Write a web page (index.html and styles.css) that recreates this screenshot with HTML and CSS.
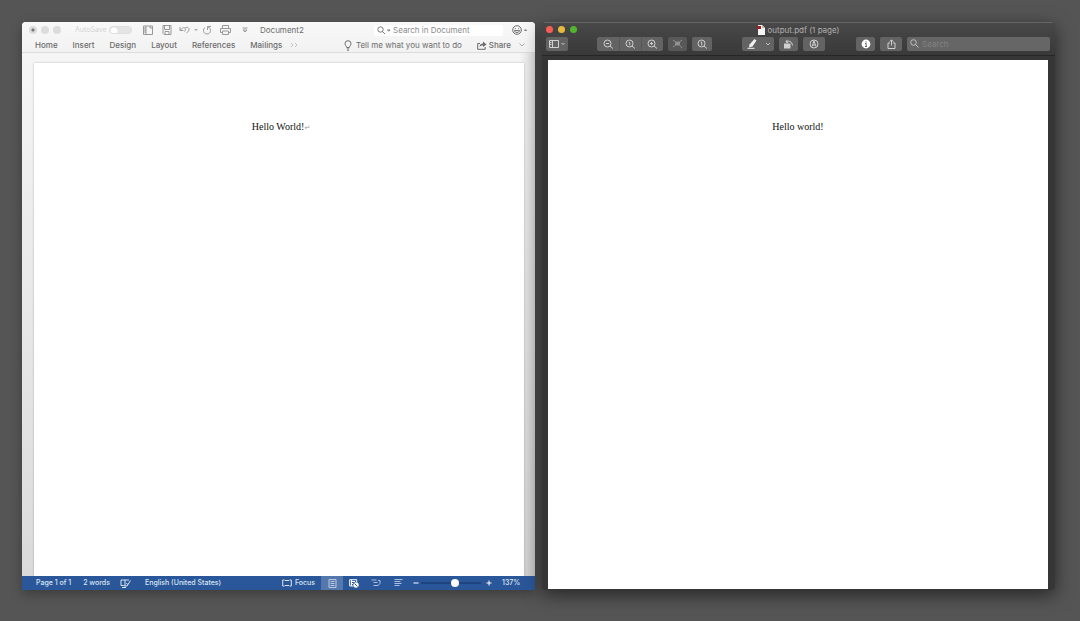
FILE: index.html
```html
<!DOCTYPE html>
<html lang="en">
<head>
<meta charset="utf-8">
<title>Document2 and output.pdf</title>
<link rel="stylesheet" href="styles.css">
</head>
<body>
<main class="desktop">
  <section class="word" aria-label="Document2">
    <header class="ribbon">
      <div class="titlebar">
        <div class="lights">
          <button class="light edited" aria-label="Close"></button>
          <button class="light" aria-label="Minimize"></button>
          <button class="light" aria-label="Zoom"></button>
        </div>
        <label class="autosave"><span class="autosave-text">AutoSave</span><input type="checkbox" class="toggle" disabled></label>
        <div class="quick">
          <button aria-label="Templates"><svg width="10" height="10" viewBox="0 0 10 10"><path d="M.5 1h9v8.500h-9zM3 1v8.500M.5 3H3M.5 5H3M.5 7H3M7 1v2h2.500"/></svg></button>
          <button aria-label="Save"><svg width="10" height="10" viewBox="0 0 10 10"><path d="M1 .5h8v9H2L1 8.500zM2.500 .5v4h5v-4M3 9.500v-3h4v3"/></svg></button>
          <button class="undo" aria-label="Undo"><svg width="12" height="10" viewBox="0 0 12 10"><path d="M1 2v3.500h3.500M1.300 5.300C3 3 4 2.500 5.500 3 7 3.500 6.500 5 5.500 6.500M6 3c2-1.500 4-.5 4 1.500S8.500 7 7.500 8"/></svg></button>
          <span class="caret"></span>
          <button class="redo" aria-label="Redo"><svg width="10" height="10" viewBox="0 0 10 10"><path d="M3 2.500C.5 4 1 9 5 9s4.500-5 2-6.500L5.500 2M5.500 5V1.500H9"/></svg></button>
          <button aria-label="Print"><svg width="11" height="10" viewBox="0 0 11 10"><path d="M2.500 3.500v-3h6v3M2.500 7.500h-2v-4h10v4h-2M2.500 6h6v3.500h-6z"/></svg></button>
          <button aria-label="Customize toolbar"><svg width="6" height="6" viewBox="0 0 6 6"><path d="M.5 1h5M1 3l2 2 2-2z"/></svg></button>
        </div>
        <h1 class="doc-name">Document2</h1>
        <label class="find">
          <svg width="14" height="9" viewBox="0 0 14 9"><circle cx="3.500" cy="3.500" r="2.700"/><path d="M5.500 5.500 8 8M10.500 4h2.500l-1.200 1z"/></svg>
          <input type="search" placeholder="Search in Document" aria-label="Search in Document">
        </label>
        <button class="smiley" aria-label="Feedback"><svg width="15" height="10" viewBox="0 0 15 10"><circle cx="5" cy="5" r="4.300"/><path d="M3.300 3.200v1M6.700 3.200v1M2.500 5.600h5C7 8.300 3 8.300 2.500 5.600M12.500 5h2l-1 1z"/></svg></button>
      </div>
      <nav class="tabs">
        <button>Home</button><button>Insert</button><button>Design</button><button>Layout</button><button>References</button><button>Mailings</button>
        <button class="more" aria-label="More tabs"><svg width="8" height="6" viewBox="0 0 8 6"><path d="m1 1 2 2-2 2M5 1l2 2-2 2"/></svg></button>
        <button class="tell"><svg width="8" height="11" viewBox="0 0 8 11"><path d="M2.700 7.500C2.500 6 1 5.500 1 3.700a3 3 0 0 1 6 0C7 5.500 5.500 6 5.300 7.500zM2.800 9h2.400M3.300 10.400h1.400"/></svg>Tell me what you want to do</button>
        <button class="share"><svg width="10" height="9" viewBox="0 0 10 9"><path d="M3 2.500H.7v5.800h7.500V6"/><path class="solid" d="M2.500 6C2.800 3.500 4 2.500 6 2.500V.5l3.500 3L6 6V4.500c-1.500 0-2.500.3-3.500 1.500z"/></svg>Share</button>
        <button class="collapse" aria-label="Collapse ribbon"><svg width="6" height="4" viewBox="0 0 6 4"><path d="m.5.5 2.500 2.500L5.500.5"/></svg></button>
      </nav>
    </header>
    <div class="canvas">
      <article class="page"><p class="hello">Hello World!<span class="mark">↵</span></p></article>
    </div>
    <footer class="status">
      <span>Page 1 of 1</span>
      <span class="words">2 words</span>
      <button class="proof" aria-label="Proofing"><svg width="11" height="9" viewBox="0 0 11 9"><path d="M9 1H5v6L3.500 6.500H1V1h4M5 7h2l3.500-5.500M2 8.500h4M6.500 4l1 1.500"/></svg></button>
      <span class="language">English (United States)</span>
      <button class="focus"><svg width="10" height="8" viewBox="0 0 10 8"><path d="M2.500 1H.7v6h1.800M7.500 1h1.800v6H7.500M3 1.500h4M3 6.500h4"/></svg>Focus</button>
      <button class="view current" aria-label="Print layout"><svg width="9" height="9" viewBox="0 0 9 9"><path d="M1 .5h7v8H1zM2.500 2.500h4M2.500 4.500h4M2.500 6.500h4"/></svg></button>
      <button class="view bright" aria-label="Web layout"><svg width="10" height="9" viewBox="0 0 10 9"><path d="M4 7H.7V.7h7V3M2 2.500h4M2 4.500h2M2.500 1v6"/><circle class="solid" cx="7" cy="6" r="2.700"/><path class="hand" d="M5.500 4.500 8.500 7.500"/></svg></button>
      <button class="view" aria-label="Outline"><svg width="10" height="8" viewBox="0 0 10 8"><path d="M.5 1h5M2.500 3.500h4M2.500 6.500h5M7 1.500h2v3L7.500 6"/></svg></button>
      <button class="view" aria-label="Draft"><svg width="9" height="8" viewBox="0 0 9 8"><path d="M.5.5h8M.5 2.500h6M.5 4.500h7M.5 6.500h5"/></svg></button>
      <button class="step" aria-label="Zoom out"><svg width="6" height="6" viewBox="0 0 6 6"><path d="M.5 3h5"/></svg></button>
      <input class="slider" type="range" min="10" max="200" value="120" aria-label="Zoom">
      <button class="step" aria-label="Zoom in"><svg width="6" height="6" viewBox="0 0 6 6"><path d="M.5 3h5M3 .5v5"/></svg></button>
      <span class="percent">137%</span>
    </footer>
  </section>

  <section class="preview" aria-label="output.pdf">
    <header class="chrome">
      <div class="caption">
        <div class="lights">
          <button class="light red" aria-label="Close"></button>
          <button class="light yellow" aria-label="Minimize"></button>
          <button class="light green" aria-label="Zoom"></button>
        </div>
        <h2 class="file"><svg width="8" height="10" viewBox="0 0 8 10"><path fill="#f4f4f4" d="M1 0h4l3 3v7H1z"/><path fill="#bbb" d="M5 0v3h3z"/><path fill="#a32020" d="M0 1h4v3H0z"/></svg>output.pdf (1 page)</h2>
      </div>
      <div class="toolbar">
        <button class="tool wide" aria-label="Sidebar"><svg width="17" height="8" viewBox="0 0 17 8"><path d="M.5.5h9v7h-9zM3.500.5v7M1 2.500h1.500M1 4.500h1.500M12.500 3l1.500 1.500L15.500 3"/></svg></button>
        <div class="group zooms">
          <button class="tool" aria-label="Zoom out"><svg width="11" height="10" viewBox="0 0 11 10"><circle cx="4.500" cy="4.500" r="3.500"/><path d="m7 7 3 2.500M3 4.500h3"/></svg></button>
          <button class="tool" aria-label="Actual size"><svg width="11" height="10" viewBox="0 0 11 10"><circle cx="4.500" cy="4.500" r="3.500"/><path d="m7 7 3 2.500M3.800 3.300h.9v3"/></svg></button>
          <button class="tool" aria-label="Zoom in"><svg width="11" height="10" viewBox="0 0 11 10"><circle cx="4.500" cy="4.500" r="3.500"/><path d="m7 7 3 2.500M3 4.500h3M4.500 3v3"/></svg></button>
        </div>
        <button class="tool small dim" aria-label="Zoom to selection"><svg width="11" height="10" viewBox="0 0 11 10"><path class="solid" d="M3 2.500h5v4H3z"/><path d="M1 1l2 1.500M10 1 8 2.500M1 8l2-1.500M8 6.500 10 9"/></svg></button>
        <button class="tool" aria-label="Zoom to fit"><svg width="11" height="10" viewBox="0 0 11 10"><circle cx="4.500" cy="4.500" r="3.500"/><path d="m7 7 3 2.500M3.800 3h.9v3.500"/></svg></button>
        <div class="group marker">
          <button class="tool" aria-label="Highlight"><svg width="12" height="10" viewBox="0 0 12 10"><path class="solid" d="M3.500 5.500 8.500 0l2 1.500L6.500 7.500 3 8.500z"/><path d="M1.500 9.300h7"/></svg></button>
          <button class="tool arrow" aria-label="Highlight colour"><svg width="6" height="4" viewBox="0 0 6 4"><path d="m1 1 2 2 2-2"/></svg></button>
        </div>
        <button class="tool small" aria-label="Rotate"><svg width="11" height="10" viewBox="0 0 11 10"><path class="solid" d="M1 4.500h6.500v5H1z"/><path d="M3 2.800c3-1.500 6-.3 6.500 3.700M4.500.8 2.800 2.800l2.500 1"/></svg></button>
        <button class="tool wide" aria-label="Markup"><svg width="10" height="10" viewBox="0 0 10 10"><circle cx="5" cy="5" r="4"/><path d="M3 7.500 5 2l2 5.500M4 6h2M5 2v2"/></svg></button>
        <button class="tool small info" aria-label="Inspector"><svg width="10" height="10" viewBox="0 0 10 10"><circle class="solid" cx="5" cy="5" r="4.400"/><path class="letter" d="M5 2.300v1.200M4 4.500h1.200v3M4 7.500h2"/></svg></button>
        <button class="tool wide" aria-label="Share"><svg width="9" height="10" viewBox="0 0 9 10"><path d="M3 4H1v5.500h7V4H6M4.500 6.500V1M2.700 2.700 4.500.8l1.800 1.900"/></svg></button>
        <label class="lookup"><svg width="9" height="9" viewBox="0 0 9 9"><circle cx="3.500" cy="3.500" r="2.800"/><path d="m5.500 5.500 3 3"/></svg><input type="search" placeholder="Search" aria-label="Search"></label>
      </div>
    </header>
    <div class="viewer">
      <article class="sheet"><p class="hello">Hello world!</p></article>
    </div>
  </section>
</main>
</body>
</html>
```

FILE: styles.css
```css
* { box-sizing: border-box; }
body {
  margin: 0;
  background: #555;
  font: 8px/12px Inter, "Liberation Sans", sans-serif;
}
button, input { font: inherit; color: inherit; border: 0; margin: 0; padding: 0; background: none; outline: 0; }
button { display: flex; align-items: center; justify-content: center; flex: none; white-space: nowrap; }
span { white-space: nowrap; }
h1, h2, p { margin: 0; font-size: inherit; font-weight: 400; }
svg { display: block; flex: none; fill: none; stroke: currentColor; stroke-width: 1; }
.solid { fill: currentColor; stroke: none; }
input[type="search"] { appearance: none; flex: 1; min-width: 0; }

.desktop {
  display: grid;
  grid-template-columns: 1fr 1fr;
  gap: 7px;
  min-height: 100vh;
  padding: 22px 25px 31px 22px;
}
.lights { display: flex; gap: 4px; flex: none; }
.light { width: 8px; height: 8px; border-radius: 50%; background: #dcdcdc; }

/* Word processor */
.word {
  display: flex;
  flex-direction: column;
  min-width: 0;
  border-radius: 4px 4px 0 0;
  overflow: hidden;
  background: #f4f4f4;
  color: #6c6c6c;
  box-shadow: 0 4px 12px rgba(0, 0, 0, .3);
}
.ribbon { background: linear-gradient(#f8f8f8, #f2f2f2); border-bottom: 1px solid #dcdcdc; }
.titlebar { display: flex; align-items: center; height: 16px; padding: 0 6px 0 7px; }
.edited { background: radial-gradient(circle, #777 0 1px, #dcdcdc 2px); }
.autosave { display: flex; align-items: center; width: 63px; margin-left: 14px; color: #d4d4d4; font-size: 7px; }
.autosave-text { width: 34px; }
.toggle { appearance: none; width: 23px; height: 8px; border-radius: 4px; background: radial-gradient(circle at 4px 4px, #fff 3px, transparent 4px) #e4e4e4; border: 1px solid #dedede; }
.quick { display: flex; align-items: center; width: 122px; color: #999; }
.quick button { width: 19px; }
.quick .undo, .quick .redo { width: 18px; }
.caret { border: 2px solid transparent; border-top-color: #aaa; border-bottom: 0; width: 4px; }
.doc-name { margin-right: auto; }
.find { display: flex; align-items: center; gap: 2px; width: 129px; height: 11px; padding-left: 3px; margin-right: 9px; border-radius: 2px; background: #fff; color: #777; }
.find input::placeholder { color: #8c8c8c; opacity: 1; }
.smiley { margin-right: 2px; }

.tabs { display: flex; align-items: center; gap: 15px; height: 14px; padding: 0 10px 0 13px; font-weight: 500; }
.tabs .more { margin-left: -7px; margin-right: auto; color: #c4c4c4; }
.tell { gap: 4px; font-weight: 400; }
.share { gap: 2px; }
.tabs .collapse { margin-left: -7px; color: #aaa; }

.canvas {
  flex: 1;
  display: flex;
  padding: 10px 11px 0 12px;
  background: linear-gradient(90deg, transparent 97%, rgba(0, 0, 0, .1)), linear-gradient(#f5f5f5, #dadada);
}
.page { flex: 1; background: #fff; box-shadow: 0 0 2px rgba(0, 0, 0, .25); padding: 57px 0 0 4px; }
.hello { text-align: center; font: 10px/14px "Liberation Serif", "Times New Roman", serif; color: #111; }
.mark { color: #999; font: 7px/8px "DejaVu Sans", sans-serif; }

.status { display: flex; align-items: center; height: 14px; padding-left: 14px; background: #2a579a; color: #dce5f2; font-size: 7px; font-weight: 500; }
.words { margin-left: 12px; }
.proof { margin-left: 10px; }
.language { margin-left: 14px; margin-right: auto; }
.focus { gap: 3px; margin-right: 6px; }
.view { width: 22px; height: 14px; color: #a9bedd; }
.current { background: #5478ae; color: #b9c9e0; }
.bright { color: #fff; }
.hand { stroke: #2a579a; }
.step { width: 10px; color: #fff; }
.view + .step { margin-left: 2px; }
.slider { appearance: none; width: 60px; height: 8px; margin-right: 3px; background: linear-gradient(#1d4380, #1d4380) center / 100% 2px no-repeat; }
.slider::-webkit-slider-thumb { appearance: none; width: 8px; height: 8px; border-radius: 50%; background: #fff; }
.percent { width: 41px; padding-left: 8px; }

/* PDF viewer */
.preview {
  position: relative;
  display: flex;
  flex-direction: column;
  min-width: 0;
  border-radius: 4px;
  overflow: hidden;
  background: #363636;
  color: #d0d0d0;
  box-shadow: 0 5px 18px rgba(0, 0, 0, .55);
}
.chrome { background: linear-gradient(#484848, #393939); border-top: 1px solid #666; border-bottom: 1px solid #262626; padding: 0 5px 0 4px; }
.caption { display: grid; grid-template-columns: 1fr auto 1fr; align-items: center; height: 13px; color: #b0b0b0; }
.caption .light { width: 7px; height: 7px; }
.caption .lights { gap: 5px; }
.caption .red { background: #fc5b54; }
.caption .yellow { background: #e7b93c; }
.caption .green { background: #52b52e; }
.file { display: flex; align-items: center; gap: 3px; }
.file svg { stroke: none; }
.toolbar { display: flex; align-items: center; gap: 5px; height: 19px; padding-bottom: 4px; }
.tool { width: 20px; height: 14px; border-radius: 2px; background: #636363; }
.small { width: 19px; }
.wide { width: 22px; }
.group { display: flex; flex: none; }
.zooms { margin-left: 24px; }
.zooms .tool { width: 22px; border-radius: 0; }
.zooms .tool + .tool { border-left: 1px solid #585858; }
.zooms .tool:first-child, .marker .tool:first-child { border-radius: 2px 0 0 2px; }
.zooms .tool:last-child, .marker .tool:last-child { border-radius: 0 2px 2px 0; }
.dim { color: #909090; background: #585858; }
.marker { margin-left: 25px; color: #f0f0f0; }
.marker .arrow { width: 12px; color: #c0c0c0; }
.info { margin-left: 26px; color: #fff; }
.letter { stroke: #636363; }
.lookup { display: flex; flex: 1; align-items: center; gap: 3px; height: 14px; min-width: 0; padding-left: 3px; border-radius: 2px; background: #666; color: #c0c0c0; }
.lookup input::placeholder { color: #828282; opacity: 1; }
.viewer { flex: 1; display: flex; padding: 4px 7px 1px 6px; }
.sheet { flex: 1; padding-top: 60px; background: #fff; }
```
